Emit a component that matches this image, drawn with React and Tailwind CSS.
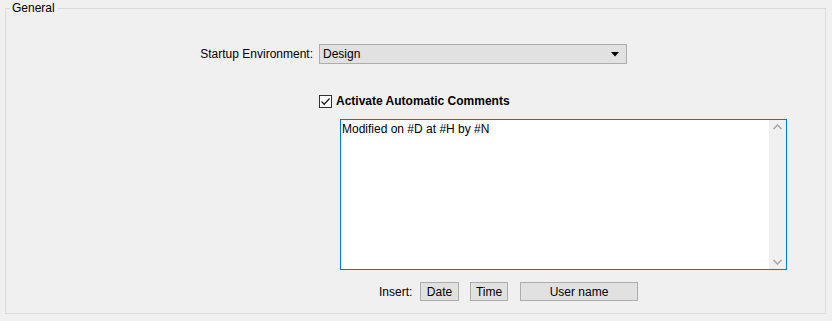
import React from 'react';

function CheckBox() {
  return (
    <span className="w-[13px] h-[13px] border border-[#333333] bg-white flex items-center justify-center shrink-0">
      <svg width="11" height="11" viewBox="0 0 11 11">
        <path d="M1.5 5.5 L4.2 8.2 L9.5 2.5" fill="none" stroke="#222" strokeWidth="1.3" />
      </svg>
    </span>
  );
}

function Btn({ children, w }) {
  return (
    <button className={`h-[19px] ${w} bg-[#e1e1e1] border border-[#adadad] text-black leading-none flex items-center justify-center`}>
      {children}
    </button>
  );
}

export default function App() {
  return (
    <div
      className="w-[832px] h-[321px] bg-[#f0f0f0] text-black text-[12px] px-[5px] pt-[1px] overflow-hidden"
      style={{ fontFamily: '"Liberation Sans", Arial, sans-serif' }}
    >
      <fieldset className="w-[821px] h-[313px] border border-[#dcdcdc] m-0 p-0">
        <legend className="ml-[4px] px-[2px] leading-[15px]">General</legend>

        {/* startup environment */}
        <div className="flex items-center mt-[28px] h-[20px]">
          <span className="w-[307px] text-right">Startup Environment:</span>
          <div className="ml-[6px] w-[308px] h-[20px] bg-[#e1e1e1] border border-[#adadad] flex items-center justify-between pl-[3px] pr-[7px]">
            <span>Design</span>
            <svg width="8" height="5" viewBox="0 0 8 5">
              <path d="M0 0 L8 0 L4 4.5 Z" fill="#000" />
            </svg>
          </div>
        </div>

        {/* automatic comments */}
        <div className="flex items-center gap-[4px] ml-[313px] mt-[30px] h-[14px]">
          <CheckBox />
          <span className="font-bold">Activate Automatic Comments</span>
        </div>

        <div className="ml-[334px] mt-[11px] w-[447px] h-[151px] border border-[#0078d7] bg-white flex">
          <div className="flex-1 pl-[1px] pt-[2px] leading-[14px]">Modified on #D at #H by #N</div>
          <div className="w-[17px] bg-[#f0f0f0] flex flex-col justify-between items-center py-[4px]">
            <svg width="9" height="6" viewBox="0 0 9 6">
              <path d="M0.5 5 L4.5 1 L8.5 5" fill="none" stroke="#a6a6a6" strokeWidth="1.5" />
            </svg>
            <svg width="9" height="6" viewBox="0 0 9 6">
              <path d="M0.5 1 L4.5 5 L8.5 1" fill="none" stroke="#a6a6a6" strokeWidth="1.5" />
            </svg>
          </div>
        </div>

        {/* insert buttons */}
        <div className="flex items-center ml-[373px] mt-[12px]">
          <span className="w-[41px]">Insert:</span>
          <Btn w="w-[39px]">Date</Btn>
          <div className="w-[11px]" />
          <Btn w="w-[38px]">Time</Btn>
          <div className="w-[12px]" />
          <Btn w="w-[118px]">User name</Btn>
        </div>
      </fieldset>
    </div>
  );
}
